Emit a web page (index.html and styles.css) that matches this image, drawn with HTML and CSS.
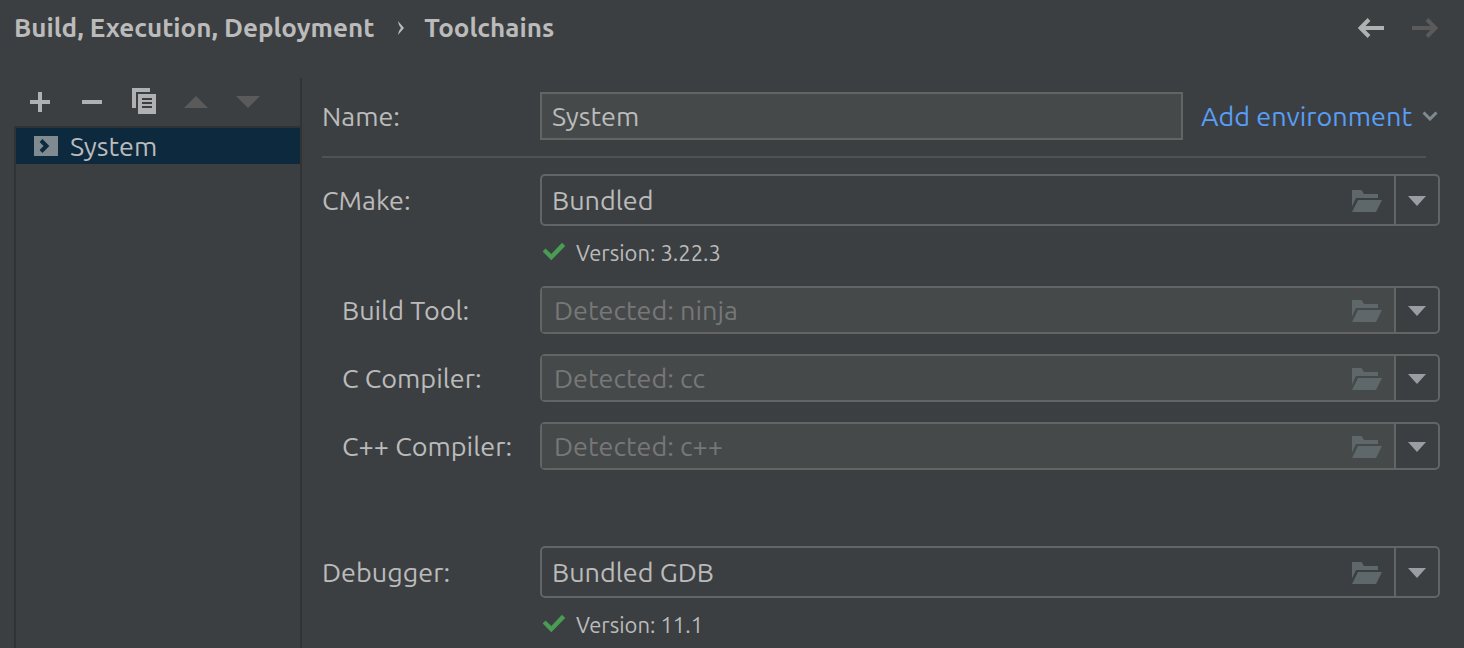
FILE: index.html
```html
<!DOCTYPE html>
<html lang="en">
<head>
<meta charset="utf-8">
<title>Toolchains</title>
<link rel="stylesheet" href="styles.css">
</head>
<body>
<svg class="symbols" aria-hidden="true">
  <symbol id="folder" viewBox="0 0 30 22"><path d="M0 0H9.500L12 4H26V8H4L0 16.500Z M6 10H30L24 22H0Z"/></symbol>
  <symbol id="drop" viewBox="0 0 18 10"><path d="M0 0H18L9 10Z"/></symbol>
  <symbol id="check" viewBox="0 0 24 20"><path d="M.7 10.500L3.500 7.500L9.300 13L20 1.800L23.200 5L9.300 19.300Z"/></symbol>
</svg>
<div class="page">
  <header class="header">
    <nav class="crumbs" aria-label="Breadcrumb">
      <a class="crumb" href="#">Build, Execution, Deployment</a>
      <svg class="crumb-sep" width="6" height="14" viewBox="0 0 6 14"><path d="M0 0L6 7L0 14L1 10L3 7L1 4Z"/></svg>
      <h1 class="crumb">Toolchains</h1>
    </nav>
    <div class="history">
      <button class="icon-button" type="button" aria-label="Back"><svg width="26" height="20" viewBox="0 0 26 20"><path class="arrow" d="M26 10H3M11 1.500L2.500 10L11 18.500"/></svg></button>
      <button class="icon-button" type="button" aria-label="Forward" disabled><svg width="26" height="20" viewBox="0 0 26 20"><path class="arrow" d="M0 10H23M15 1.500L23.500 10L15 18.500"/></svg></button>
    </div>
  </header>
  <div class="body">
    <aside class="sidebar">
      <div class="toolbar">
        <button class="icon-button" type="button" aria-label="Add"><svg width="24" height="28" viewBox="0 0 24 28"><path d="M10 4H14V12H22V16H14V24H10V16H2V12H10Z"/></svg></button>
        <button class="icon-button" type="button" aria-label="Remove"><svg width="24" height="28" viewBox="0 0 24 28"><path d="M2 12H22V16H2Z"/></svg></button>
        <button class="icon-button" type="button" aria-label="Copy"><svg width="24" height="28" viewBox="0 0 24 28"><path d="M0 0H18V4H4V20H0Z"/><path fill-rule="evenodd" d="M6 6H24V26H6Z M10 10V12H20V10Z M10 14V16H20V14Z M10 18V20H20V18Z"/></svg></button>
        <button class="icon-button" type="button" aria-label="Move up" disabled><svg width="24" height="28" viewBox="0 0 24 28"><path d="M0 20H24L12 8Z"/></svg></button>
        <button class="icon-button" type="button" aria-label="Move down" disabled><svg width="24" height="28" viewBox="0 0 24 28"><path d="M0 8H24L12 20Z"/></svg></button>
      </div>
      <div class="list">
        <button class="item" type="button"><svg class="item-icon" width="24" height="20" viewBox="0 0 24 20"><path d="M0 0H24V20H0Z"/><path class="item-mark" d="M7 4.500L12.500 10L7 15.500"/></svg>System</button>
      </div>
    </aside>
    <main class="form">
      <div class="row">
        <label class="label" for="name">Name:</label>
        <div class="name-group">
          <input class="name" id="name" type="text" value="System">
          <button class="link" type="button">Add environment<svg width="16" height="10" viewBox="0 0 16 10"><path d="M1.500 1.500L8 8L14.500 1.500"/></svg></button>
        </div>
      </div>
      <hr class="rule">
      <div class="row">
        <label class="label" for="cmake">CMake:</label>
        <div class="combo combo-tall">
          <input class="value" id="cmake" type="text" value="Bundled">
          <button class="browse" type="button" aria-label="Browse"><svg width="30" height="22"><use href="#folder"/></svg></button>
          <button class="drop" type="button" aria-label="Show options"><svg width="18" height="10"><use href="#drop"/></svg></button>
        </div>
      </div>
      <p class="status"><svg class="check" width="24" height="20"><use href="#check"/></svg>Version: 3.22.3</p>
      <div class="tools">
        <div class="row">
          <label class="label label-sub" for="build">Build Tool:</label>
          <div class="combo combo-empty">
            <input class="value" id="build" type="text" placeholder="Detected: ninja">
            <button class="browse" type="button" aria-label="Browse"><svg width="30" height="22"><use href="#folder"/></svg></button>
            <button class="drop" type="button" aria-label="Show options"><svg width="18" height="10"><use href="#drop"/></svg></button>
          </div>
        </div>
        <div class="row">
          <label class="label label-sub" for="cc">C Compiler:</label>
          <div class="combo combo-empty">
            <input class="value" id="cc" type="text" placeholder="Detected: cc">
            <button class="browse" type="button" aria-label="Browse"><svg width="30" height="22"><use href="#folder"/></svg></button>
            <button class="drop" type="button" aria-label="Show options"><svg width="18" height="10"><use href="#drop"/></svg></button>
          </div>
        </div>
        <div class="row">
          <label class="label label-sub" for="cpp">C++ Compiler:</label>
          <div class="combo combo-empty">
            <input class="value" id="cpp" type="text" placeholder="Detected: c++">
            <button class="browse" type="button" aria-label="Browse"><svg width="30" height="22"><use href="#folder"/></svg></button>
            <button class="drop" type="button" aria-label="Show options"><svg width="18" height="10"><use href="#drop"/></svg></button>
          </div>
        </div>
      </div>
      <div class="row">
        <label class="label" for="debugger">Debugger:</label>
        <div class="combo combo-tall">
          <input class="value" id="debugger" type="text" value="Bundled GDB">
          <button class="browse" type="button" aria-label="Browse"><svg width="30" height="22"><use href="#folder"/></svg></button>
          <button class="drop" type="button" aria-label="Show options"><svg width="18" height="10"><use href="#drop"/></svg></button>
        </div>
      </div>
      <p class="status"><svg class="check" width="24" height="20"><use href="#check"/></svg>Version: 11.1</p>
    </main>
  </div>
</div>
</body>
</html>
```
FILE: styles.css
```css
* { box-sizing: border-box; }
body {
  margin: 0;
  background: #3c3f41;
  color: #bbbbbb;
  font: 27px/32px Ubuntu, "Noto Sans", sans-serif;
}
button, input { font: inherit; color: inherit; }
button { padding: 0; border: 0; background: none; }
svg { display: block; flex: none; fill: currentColor; }
.symbols { display: none; }

.page { display: flex; flex-direction: column; min-height: 100vh; }
.header {
  display: flex;
  align-items: center;
  justify-content: space-between;
  padding: 12px 26px 34px 14px;
}
.crumbs { display: flex; align-items: center; gap: 20px; }
.crumb {
  margin: 0;
  color: inherit;
  font-size: 26px;
  font-weight: 700;
  line-height: 32px;
  text-decoration: none;
}
.crumb-sep { margin-left: 4px; }
.history { display: flex; gap: 28px; }
.icon-button { color: #afb1b3; }
.icon-button:disabled { color: #5a5a5a; }
.arrow { fill: none; stroke: currentColor; stroke-width: 4; }

.body { display: flex; flex: 1; }
.sidebar {
  display: flex;
  flex-direction: column;
  flex: none;
  width: 288px;
  margin-left: 14px;
  border-right: 2px solid #323232;
}
.toolbar { display: flex; gap: 28px; padding: 10px 14px; }
.list { flex: 1; border: solid #323232; border-width: 2px 0 0 2px; }
.item {
  display: flex;
  align-items: center;
  gap: 12px;
  width: 100%;
  height: 36px;
  padding-left: 18px;
  background: #0d293e;
}
.item-icon { color: #7f8b91; }
.item-mark { fill: none; stroke: #0d293e; stroke-width: 4; }

.form { flex: 1; min-width: 0; padding: 14px 24px 0 20px; }
.row { display: grid; grid-template-columns: 218px 1fr; align-items: center; }
.label-sub { padding-left: 20px; }
.name-group { display: flex; align-items: center; gap: 18px; padding-right: 2px; }
.name {
  flex: 1;
  min-width: 0;
  height: 48px;
  padding: 0 10px;
  border: 2px solid #646464;
  background: #45494a;
}
.link { display: flex; align-items: center; gap: 10px; color: #589df6; }
.link svg { fill: none; stroke: #7f8b91; stroke-width: 3; }
.rule { height: 2px; margin: 16px 14px 16px 0; border: 0; background: #515151; }
.combo {
  display: flex;
  height: 48px;
  border: 2px solid #646464;
  border-radius: 5px;
}
.combo-tall { height: 52px; }
.value {
  flex: 1;
  min-width: 0;
  padding: 0 10px;
  border: 0;
  background: none;
}
.combo-empty .value { padding-left: 12px; background: #45494a; }
.combo-empty .browse { background: #45494a; }
.value::placeholder { color: #777777; opacity: 1; }
.browse, .drop { display: grid; place-items: center; padding-top: 2px; }
.browse { width: 54px; color: #5e676a; }
.drop {
  width: 44px;
  border-left: 2px solid #646464;
  color: #9a9da1;
}
.status {
  display: flex;
  align-items: center;
  gap: 10px;
  height: 50px;
  margin: 0 0 0 220px;
  padding-top: 4px;
  font-size: 22px;
}
.check { margin-bottom: 4px; color: #499c54; }
.tools { display: grid; gap: 20px; margin: 10px 0 76px; }
```
